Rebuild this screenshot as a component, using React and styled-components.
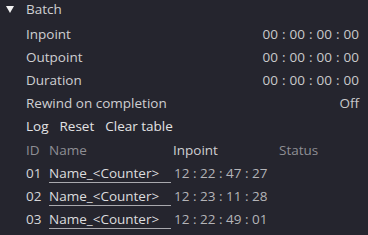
import React from 'react';
import styled, { createGlobalStyle } from 'styled-components';

const GlobalStyle = createGlobalStyle`
  html, body {
    margin: 0;
    padding: 0;
    background: #25252e;
  }
  body {
    font-family: 'Open Sans', 'Noto Sans', sans-serif;
  }
`;

const Panel = styled.div`
  width: 368px;
  height: 235px;
  background: #25252e;
  color: #cfcfd2;
  font-size: 13.5px;
  box-sizing: border-box;
  padding: 0 9px 0 6px;
  overflow: hidden;
`;

const Header = styled.div`
  display: flex;
  align-items: center;
  height: 18px;
  gap: 12px;
`;

const Caret = styled.span`
  width: 0;
  height: 0;
  border-left: 4px solid transparent;
  border-right: 4px solid transparent;
  border-top: 7px solid #f2f2f2;
`;

const Body = styled.div`
  padding-left: 20px;
  padding-top: 4px;
`;

const PropRow = styled.div`
  display: flex;
  justify-content: space-between;
  align-items: center;
  height: 23px;
`;

const Value = styled.span`
  color: #c9c9cc;
  white-space: pre;
  word-spacing: 0.5px;
`;

const Actions = styled.div`
  display: flex;
  gap: 11px;
  height: 24px;
  align-items: center;
  color: #e2e2e4;
`;

const Table = styled.div`
  display: grid;
  grid-template-columns: 23px 124px 106px 1fr;
  grid-auto-rows: 23px;
  align-items: center;
`;

const HeadCell = styled.span`
  color: ${p => (p.$bright ? '#cfcfd2' : '#8e8e94')};
`;

const Cell = styled.span`
  color: #d6d6d8;
`;

const NameField = styled.span`
  color: #dcdcde;
  border-bottom: 1px solid #a9a9ae;
  margin-right: 2px;
  line-height: 17px;
  padding-top: 2px;
`;

const Time = styled.span`
  color: #b4b4b8;
  white-space: pre;
  padding-left: 1px;
`;

const props = [
  ['Inpoint', '00 : 00 : 00 : 00'],
  ['Outpoint', '00 : 00 : 00 : 00'],
  ['Duration', '00 : 00 : 00 : 00'],
  ['Rewind on completion', 'Off'],
];

const rows = [
  ['01', 'Name_<Counter>', '12 : 22 : 47 : 27'],
  ['02', 'Name_<Counter>', '12 : 23 : 11 : 28'],
  ['03', 'Name_<Counter>', '12 : 22 : 49 : 01'],
];

export default function App() {
  return (
    <Panel>
      <GlobalStyle />
      <Header>
        <Caret />
        <span>Batch</span>
      </Header>
      <Body>
        {props.map(([label, value]) => (
          <PropRow key={label}>
            <span>{label}</span>
            <Value>{value}</Value>
          </PropRow>
        ))}
        <Actions>
          <span>Log</span>
          <span>Reset</span>
          <span>Clear table</span>
        </Actions>
        <Table>
          <HeadCell>ID</HeadCell>
          <HeadCell>Name</HeadCell>
          <HeadCell $bright>Inpoint</HeadCell>
          <HeadCell>Status</HeadCell>
          {rows.map(([id, name, time]) => (
            <React.Fragment key={id}>
              <Cell>{id}</Cell>
              <NameField>{name}</NameField>
              <Time>{time}</Time>
              <span />
            </React.Fragment>
          ))}
        </Table>
      </Body>
    </Panel>
  );
}
